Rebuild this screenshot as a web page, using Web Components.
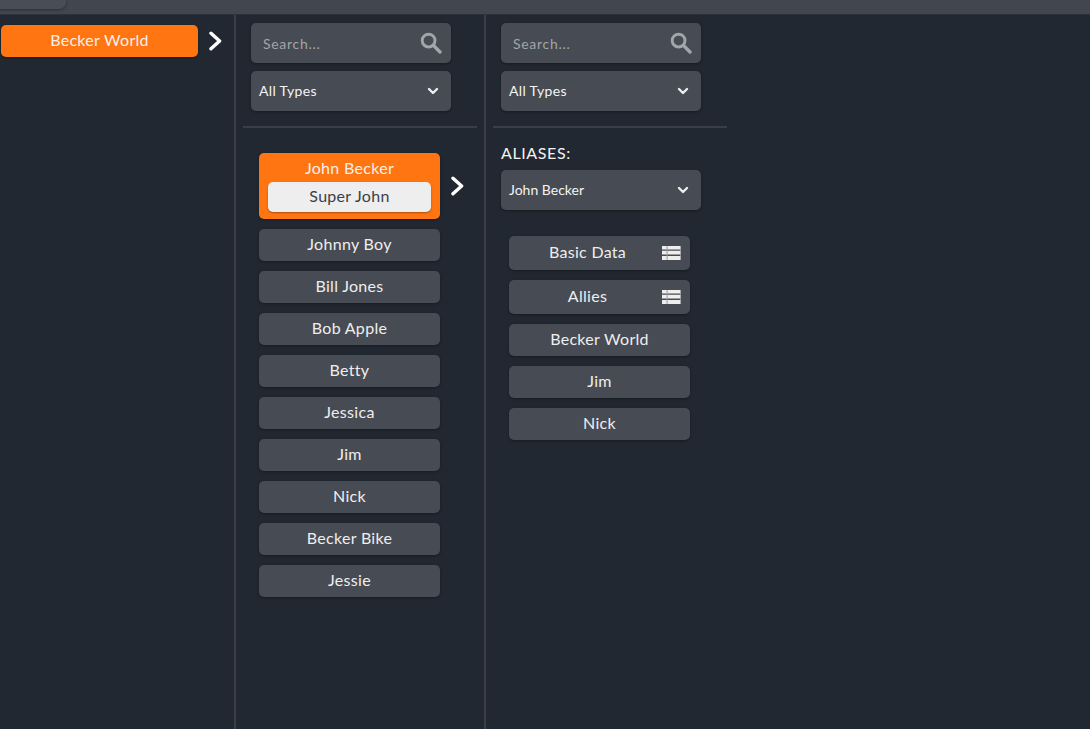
<!DOCTYPE html>
<html><head><meta charset="utf-8"><style>
html,body{margin:0;padding:0;height:100%;background:#222831;overflow:hidden}
body{font-family:Lato,"Noto Sans",sans-serif;color:#eee}
</style></head><body>
<app-shell>
<x-col w="236">
  <div style="height:10px"></div>
  <x-row><x-item style="width:197px;margin-left:1px" active>Becker World</x-item><x-chev style="margin-left:10px"></x-chev></x-row>
</x-col>
<x-col w="250">
  <x-filters></x-filters>
  <x-list>
    <x-row><x-item style="width:181px;" active sub="Super John">John Becker</x-item><x-chev style="margin-left:10px"></x-chev></x-row>
    <x-item>Johnny Boy</x-item><x-item>Bill Jones</x-item><x-item>Bob Apple</x-item><x-item>Betty</x-item><x-item>Jessica</x-item><x-item>Jim</x-item><x-item>Nick</x-item><x-item>Becker Bike</x-item><x-item>Jessie</x-item>
  </x-list>
</x-col>
<x-col w="250" last>
  <x-filters></x-filters>
  <x-aliases></x-aliases>
  <x-list style="padding-top:26px">
    <x-item icon tall>Basic Data</x-item><x-item icon tall>Allies</x-item><x-item>Becker World</x-item><x-item>Jim</x-item><x-item>Nick</x-item>
  </x-list>
</x-col>
</app-shell>
<script>
const def=(n,html)=>customElements.define(n,class extends HTMLElement{connectedCallback(){if(this.shadowRoot)return;const r=this.attachShadow({mode:'open'});r.innerHTML=typeof html==='function'?html(this):html;}});
const CARET='<svg width="12" height="8" viewBox="0 0 12 8"><path d="M2 2 6 6 10 2" fill="none" stroke="#eee" stroke-width="2.4" stroke-linecap="round" stroke-linejoin="round"/></svg>';
def('app-shell',`<style>:host{display:flex;flex-direction:column;height:729px}
.top{height:14px;background:#42464e;border-bottom:1px solid #2c313a;position:relative;flex:none;overflow:hidden}
.tab{position:absolute;left:-8px;top:-8px;width:74px;height:17px;background:#494d55;border-radius:7px;box-shadow:0 1px 3px #0005}
.cols{display:flex;flex:1}</style><div class="top"><div class="tab"></div></div><div class="cols"><slot></slot></div>`);
def('x-col',h=>`<style>:host{display:block;box-sizing:border-box;flex:none;height:100%;width:${h.getAttribute('w')}px;${h.hasAttribute('last')?'':'border-right:2px solid #3a3f47;'}}</style><slot></slot>`);
def('x-row',`<style>:host{display:flex;align-items:center}</style><slot></slot>`);
def('x-chev',`<style>:host{display:block;width:14px;height:20px;flex:none}svg{display:block}</style><svg width="14" height="20" viewBox="0 0 14 20"><path d="M3 2.2 11.6 10 3 17.8" fill="none" stroke="#fff" stroke-width="3.4" stroke-linecap="round" stroke-linejoin="round"/></svg>`);
def('x-item',h=>{const a=h.hasAttribute('active'),s=h.getAttribute('sub'),ic=h.hasAttribute('icon'),t=h.hasAttribute('tall');const H=t?34:32;
return `<style>:host{display:block;box-sizing:border-box;width:181px;flex:none;border-radius:5px;background:${a?'#ff7512':'#474b53'};color:${a?'#f6f0ea':'#eee'};box-shadow:0 1px 3px #0005;font-size:16px;letter-spacing:.3px;text-align:center;position:relative;padding:${s?'5px 9px 7px':ic?'0 24px 0 0':'0'};${s?'':`height:${H}px;line-height:${H-2}px;`}}
:host([active]){box-shadow:0 1px 3px #0004}
.l{line-height:${s?'20px':'inherit'}}
.s{background:#eee;color:#3c4048;border-radius:5px;height:30px;line-height:28px;margin-top:4px;box-shadow:0 1px 2px #0005}
svg{position:absolute;right:9px;top:10px}</style><div class="l"><slot></slot></div>${s?`<div class="s">${s}</div>`:''}${ic?'<svg width="19" height="14" viewBox="0 0 19 14"><path fill="#eee" d="M0 0h19v3.6H0zM0 4.8h19v3.8H0zM0 9.9h19V14H0z"/><path fill="#9a9da2" d="M4.6 0h1v14h-1zM18.2 0h.8v14h-.8z"/></svg>':''}`});
def('x-filters',`<style>:host{display:block;padding:8px 8px 0 7px}
.b{width:200px;height:40px;margin-left:8px;box-sizing:border-box;background:#474b53;border-radius:5px;box-shadow:0 1px 3px #0005;display:flex;align-items:center;justify-content:space-between}
.s{padding:0 9px 0 12px;color:#a2a5a9;font-size:14px;letter-spacing:.7px;margin-bottom:8px}
.t{padding:0 12px 0 8px;color:#f4f4f4;font-size:14px;letter-spacing:.35px}
.t span{margin-top:-2px}
hr{margin:15px 0 0;border:0;height:2px;background:#3a3f47;width:234px}</style>
<div class="b s"><span>Search...</span><svg width="22" height="22" viewBox="0 0 22 22"><circle cx="8.6" cy="8.6" r="6.4" fill="none" stroke="#a2a5a9" stroke-width="2.9"/><path d="M13.4 13.4 20 20" stroke="#a2a5a9" stroke-width="3.4" stroke-linecap="round"/></svg></div>
<div class="b t"><span>All Types</span>${CARET}</div><hr>`);
def('x-aliases',`<style>:host{display:block;padding:15px 0 0 15px}
.h{font-size:16px;letter-spacing:.6px;line-height:20px;color:#f2f2f2;margin-bottom:7px}
.b{width:200px;height:40px;box-sizing:border-box;background:#474b53;border-radius:5px;box-shadow:0 1px 3px #0005;display:flex;align-items:center;justify-content:space-between;padding:0 12px 0 8px;color:#f4f4f4;font-size:14px}
.b span{margin-top:-1px}</style>
<div class="h">ALIASES:</div><div class="b"><span>John Becker</span>${CARET}</div>`);
def('x-list',`<style>:host{display:flex;flex-direction:column;gap:10px;padding:25px 0 0 23px}</style><slot></slot>`);
</script>
</body></html>
